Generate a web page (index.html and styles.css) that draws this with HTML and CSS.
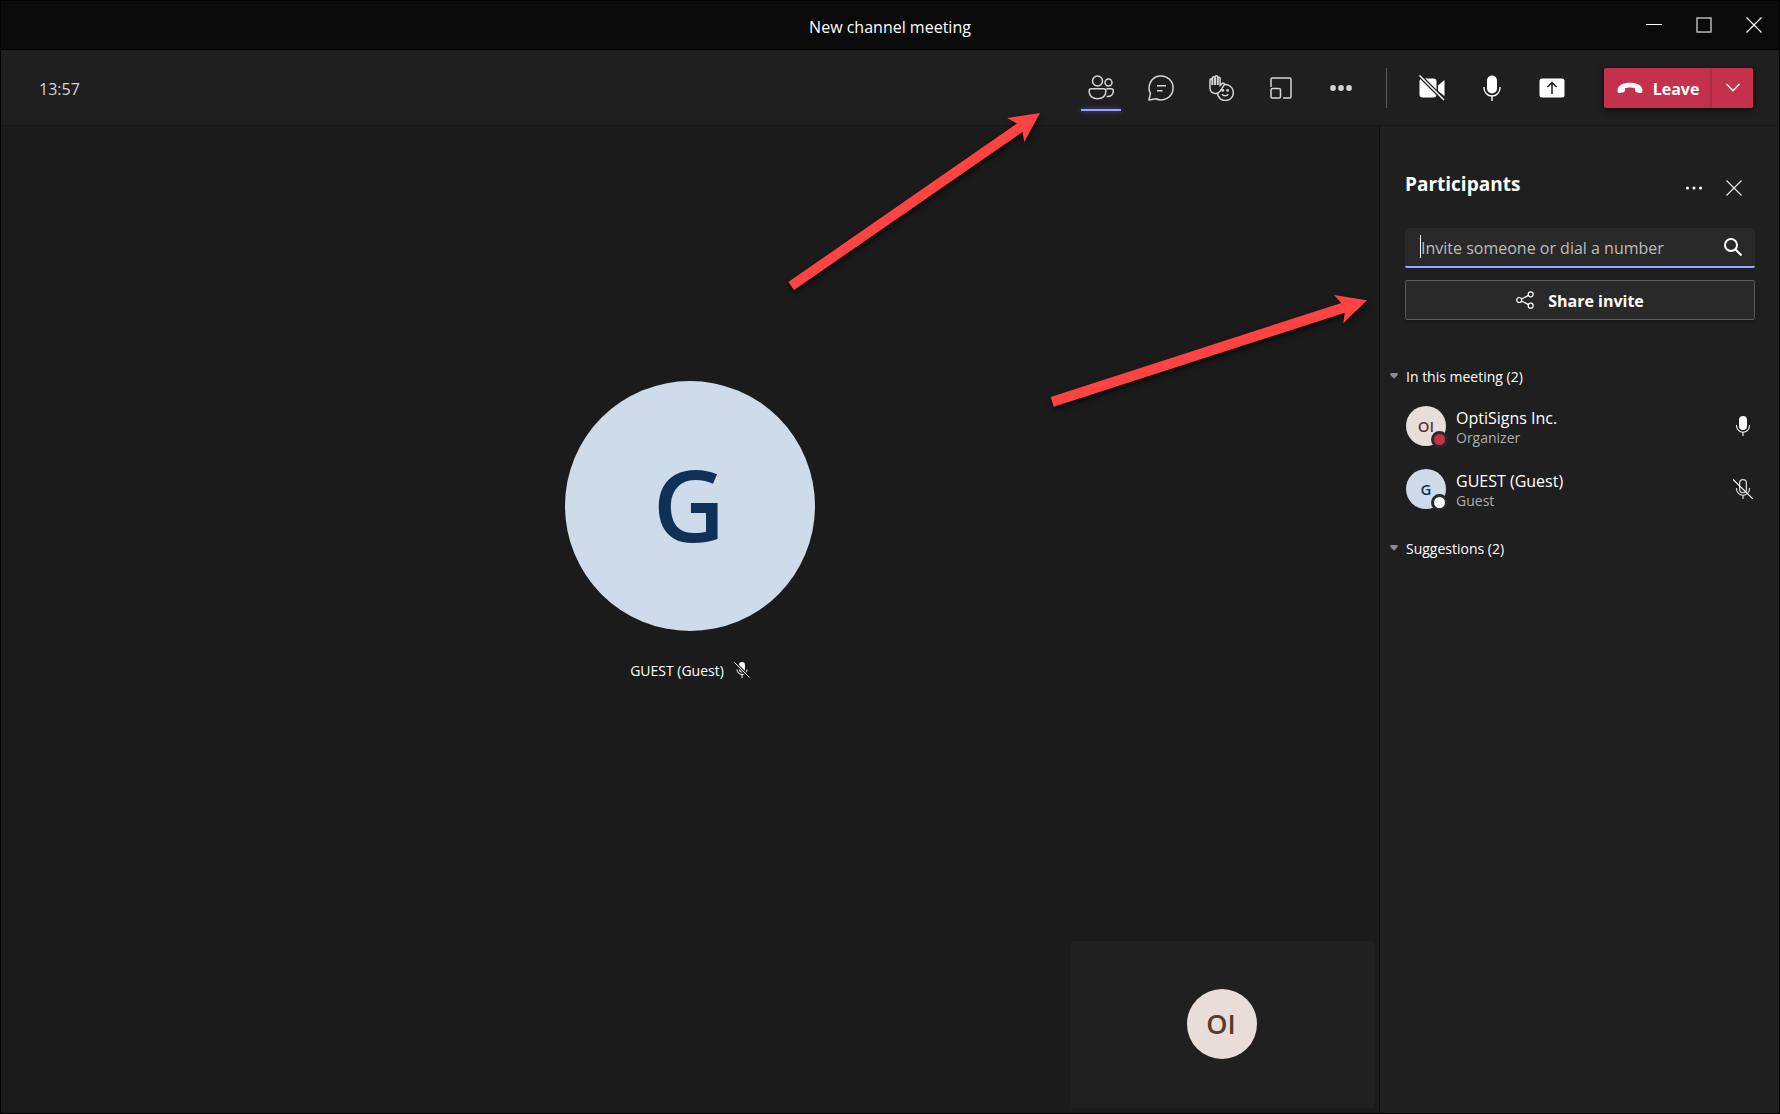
FILE: index.html
```html
<!DOCTYPE html>
<html lang="en">
<head>
<meta charset="utf-8">
<title>New channel meeting</title>
<link rel="stylesheet" href="styles.css">
</head>
<body>
<div class="window">
  <header class="titlebar">
    <h1 class="title">New channel meeting</h1>
    <div class="window-controls">
      <button class="win-btn" aria-label="Minimize"><svg width="16" height="16" viewBox="0 0 16 16"><path d="M0 7.500h16" stroke="#fff"/></svg></button>
      <button class="win-btn" aria-label="Maximize"><svg width="16" height="16" viewBox="0 0 16 16"><rect x="1" y="1" width="14" height="14" fill="none" stroke="#c4c4c4" stroke-width="1.400"/></svg></button>
      <button class="win-btn" aria-label="Close"><svg width="16" height="16" viewBox="0 0 16 16"><path d="M.5 .5l15 15M15.500 .5l-15 15" stroke="#fff" stroke-width="1.200"/></svg></button>
    </div>
  </header>

  <div class="toolbar">
    <time class="timer">13:57</time>
    <div class="tools">
      <button class="tool active" aria-label="Participants"><svg width="26" height="26" viewBox="0 0 26 26" fill="none" stroke="#d6d6d6" stroke-width="1.500"><circle cx="9.500" cy="6" r="5"/><circle cx="20.500" cy="7.500" r="3.500"/><path d="M3.200 13.800h12.600c1.200 0 2 .8 2 2v1.200c0 4-3.500 6.700-8.300 6.700S1.200 21 1.200 17v-1.200c0-1.200.8-2 2-2zM18.500 13.800h4.800c1.100 0 2 .9 2 2v.7c0 3.400-2.600 5.300-6.700 5.100"/></svg></button>
      <button class="tool" aria-label="Chat"><svg width="26" height="26" viewBox="0 0 26 26" fill="none" stroke="#d6d6d6" stroke-width="1.500"><path d="M1 25l1.400-6.600A12 12 0 1 1 8 23.800z" stroke-linejoin="round"/><path d="M9 10.800h9M9 15.800h5.500"/></svg></button>
      <button class="tool" aria-label="Reactions"><svg width="26" height="26" viewBox="0 0 26 26" fill="none" stroke="#d6d6d6" stroke-width="1.500"><path d="M2 13V5c0-1.600 2.400-1.600 2.400 0v5V3c0-1.700 2.700-1.700 2.700 0v6.500V2c0-1.600 2.600-1.600 2.600 0v7.500V3.300c0-1.500 2.400-1.500 2.400 0v7l2-1.700c1.500-1.200 3 .1 2 1.500l-4 6c-1.200 1.800-3.100 2.500-5 2.300C3.500 18 2 16 2 13z"/><path d="M4.400 4v6M7.100 3v7M9.700 3v7" stroke-width="1.800"/><path d="M16.500 9.600a8 8 0 1 1-7 9.400M14 19.200c1.200 2.200 5 2.200 6.200 0"/><circle cx="14.800" cy="15.400" r=".7" fill="#d6d6d6"/><circle cx="19.600" cy="15.400" r=".7" fill="#d6d6d6"/></svg></button>
      <button class="tool" aria-label="Breakout rooms"><svg width="22" height="22" viewBox="0 0 22 22" fill="none" stroke="#d6d6d6" stroke-width="1.500"><path d="M1 10V2.500C1 1.700 1.700 1 2.500 1h17c.8 0 1.500.7 1.500 1.500v17c0 .8-.7 1.500-1.500 1.500H13"/><rect x="1" y="11.500" width="9.500" height="9.500" rx="1.500"/></svg></button>
      <button class="tool" aria-label="More actions"><svg width="24" height="8" viewBox="0 0 24 8" fill="#d6d6d6"><circle cx="4" cy="4" r="2.900"/><circle cx="12" cy="4" r="2.900"/><circle cx="20" cy="4" r="2.900"/></svg></button>
    </div>
    <div class="divider"></div>
    <div class="tools">
      <button class="tool" aria-label="Turn camera on"><svg width="26" height="26" viewBox="0 0 26 26" fill="#fff"><rect x=".5" y="3.500" width="17" height="19" rx="3"/><path d="M19 10.500L25.500 5v16L19 16z"/><path d="M0 0l26 26" stroke="#1f1f1f" stroke-width="4"/><path d="M.5 .5l24.500 24.500" stroke="#fff" stroke-width="1.500"/></svg></button>
      <button class="tool" aria-label="Mute"><svg width="26" height="26" viewBox="0 0 26 26"><rect x="8" y=".5" width="10" height="18" rx="5" fill="#fff"/><path d="M5 12v1a8 8 0 0 0 16 0v-1M13 21v5" fill="none" stroke="#fff" stroke-width="1.400"/></svg></button>
      <button class="tool" aria-label="Share content"><svg width="26" height="26" viewBox="0 0 26 26"><rect x=".5" y="3.500" width="25" height="19" rx="2.500" fill="#fff"/><path d="M13 19V7.500M8.500 12L13 7.500l4.500 4.500" fill="none" stroke="#1f1f1f" stroke-width="1.500"/></svg></button>
    </div>
    <div class="leave-group">
      <button class="leave"><svg width="26" height="12" viewBox="0 0 26 12" fill="#fff"><path d="M13 .7C19.500 .7 25.500 3 25.500 8.500c0 2-.9 2.900-2.500 2.500l-3.300-.8c-1.200-.3-1.700-1-1.700-2.200V6.200C16 5.300 10 5.300 8 6.200V8c0 1.200-.5 1.900-1.700 2.200L3 11C1.400 11.400.5 10.500.5 8.500.5 3 6.500.7 13 .7z"/></svg><span class="btn-text">Leave</span></button>
      <button class="leave-menu" aria-label="Leave options"><svg width="14" height="9" viewBox="0 0 14 9"><path d="M.5 1L7 7.800 13.500 1" fill="none" stroke="#fff" stroke-width="1.300"/></svg></button>
    </div>
  </div>

  <div class="content">
    <main class="stage">
      <section class="speaker">
        <div class="avatar guest avatar-xl">G</div>
        <div class="speaker-name"><span class="btn-text">GUEST (Guest)</span>
          <svg width="16" height="16" viewBox="0 0 16 16"><rect x="5" y="0" width="6" height="10.500" rx="3" fill="#fff"/><path d="M3 7.500a5 5 0 0 0 10 0M8 12.500V16" fill="none" stroke="#fff"/><path d="M0 0l16 16" stroke="#1b1b1b" stroke-width="3"/><path d="M.5 .5l15 15" stroke="#fff"/></svg>
        </div>
      </section>
      <section class="self-view"><div class="avatar organizer avatar-lg">OI</div></section>
    </main>

    <aside class="panel">
      <div class="panel-head">
        <h2 class="panel-title">Participants</h2>
        <button class="panel-btn" aria-label="More options"><svg width="18" height="4" viewBox="0 0 18 4" fill="#fff"><circle cx="2.500" cy="2" r="1.500"/><circle cx="9" cy="2" r="1.500"/><circle cx="15.500" cy="2" r="1.500"/></svg></button>
        <button class="panel-btn" aria-label="Close panel"><svg width="16" height="16" viewBox="0 0 16 16"><path d="M.5 .5l15 15M15.500 .5l-15 15" stroke="#e8e8e8" stroke-width="1.200"/></svg></button>
      </div>
      <div class="search">
        <input class="search-input" type="text" aria-label="Invite someone or dial a number" placeholder="Invite someone or dial a number">
        <span class="caret"></span>
        <svg width="18" height="18" viewBox="0 0 18 18" fill="none" stroke="#fff" stroke-width="2"><circle cx="7" cy="7" r="6"/><path d="M11.300 11.300l6.200 6.200"/></svg>
      </div>
      <button class="share"><svg width="18" height="18" viewBox="0 0 18 18" fill="none" stroke="#fff" stroke-width="1.200"><circle cx="3.200" cy="9" r="2.500"/><circle cx="14.700" cy="3.300" r="2.500"/><circle cx="14.700" cy="14.700" r="2.500"/><path d="M5.500 8l7-3.600M5.500 10l7 3.600"/></svg><span class="btn-text">Share invite</span></button>

      <button class="group-head" aria-expanded="true"><svg width="8" height="6" viewBox="0 0 8 6" fill="#8c8c8c"><path d="M.5 0h7c.5 1.200.2 2-.6 2.800L4 5.700 1.100 2.800C.3 2 0 1.200.5 0z"/></svg>In this meeting (2)</button>
      <ul class="people">
        <li class="person">
          <div class="avatar organizer avatar-sm">OI<span class="presence busy"></span></div>
          <div class="who"><span class="name">OptiSigns Inc.</span><span class="role">Organizer</span></div>
          <svg width="20" height="20" viewBox="0 0 20 20"><rect x="6" y="0" width="8" height="14" rx="4" fill="#fff"/><path d="M3.500 9v.8a6.500 6.500 0 0 0 13 0V9M10 16.500V20" fill="none" stroke="#fff" stroke-width="1.100"/></svg>
        </li>
        <li class="person">
          <div class="avatar guest avatar-sm">G<span class="presence"></span></div>
          <div class="who"><span class="name">GUEST (Guest)</span><span class="role">Guest</span></div>
          <svg width="20" height="20" viewBox="0 0 20 20" fill="none" stroke="#d8d8d8" stroke-width="1.200"><rect x="6.600" y=".6" width="6.800" height="13" rx="3.400"/><path d="M3.500 9v.8a6.500 6.500 0 0 0 13 0V9M10 16.500V20"/><path d="M0 .5l20 19.500" stroke="#fff"/></svg>
        </li>
      </ul>
      <button class="group-head" aria-expanded="true"><svg width="8" height="6" viewBox="0 0 8 6" fill="#8c8c8c"><path d="M.5 0h7c.5 1.200.2 2-.6 2.800L4 5.700 1.100 2.800C.3 2 0 1.200.5 0z"/></svg>Suggestions (2)</button>
    </aside>
  </div>

  <svg class="annotations" width="1400" height="420" viewBox="0 0 1400 420" fill="#ff4343" aria-hidden="true">
    <path d="M1040 113L1007 118 1017 123.500 788.300 282 794 290 1022.500 132 1024.300 142z"/>
    <path d="M1367 300.300L1334 295 1341.300 303 1050.700 397 1053.700 406.700 1344.700 312.700 1343.300 323.300z"/>
  </svg>
</div>
</body>
</html>
```
FILE: styles.css
```css
* {
  box-sizing: border-box;
}

body {
  margin: 0;
  background: #000;
  color: #fff;
  font-family: "Open Sans", "Noto Sans", sans-serif;
  font-size: 16px;
}

button {
  display: flex;
  align-items: center;
  justify-content: center;
  margin: 0;
  padding: 0;
  border: 0;
  background: none;
  color: inherit;
  font: inherit;
}

svg {
  flex: none;
}

.window {
  position: relative;
  display: flex;
  flex-direction: column;
  min-height: 100vh;
  border: 1px solid #000;
  background: #1b1b1b;
}

.titlebar {
  display: grid;
  grid-template-columns: 1fr auto 1fr;
  align-items: center;
  height: 49px;
  border-bottom: 1px solid #000;
  background: #0a0a0a;
}

.title {
  grid-column: 2;
  margin: 0;
  padding-top: 3px;
  font-size: 16px;
  font-weight: 400;
}

.window-controls {
  display: flex;
  justify-content: flex-end;
}

.win-btn {
  width: 50px;
  height: 48px;
}

.toolbar {
  display: flex;
  align-items: center;
  height: 76px;
  padding: 0 26px 0 38px;
  border-bottom: 1px solid #171717;
  background: #1f1f1f;
}

.timer {
  flex: 1;
  padding-top: 2px;
  color: #d6d6d6;
}

.btn-text {
  padding-top: 2px;
}

.tools {
  display: flex;
  gap: 20px;
}

.tool {
  position: relative;
  width: 40px;
  height: 40px;
}

.active::after {
  content: "";
  position: absolute;
  right: 0;
  bottom: -3px;
  left: 0;
  height: 2px;
  background: #9ea2ff;
  box-shadow: 0 0 5px #5b5fc7;
}

.divider {
  width: 1px;
  height: 40px;
  margin: 0 25px;
  background: #5c5c5c;
}

.leave-group {
  display: flex;
  height: 40px;
  margin-left: 32px;
  border-radius: 2px;
  background: #c4314b;
  box-shadow: 0 2px 6px #000000b0;
  overflow: hidden;
}

.leave {
  gap: 10px;
  width: 108px;
  font-weight: 700;
}

.leave-menu {
  width: 41px;
  box-shadow: 0 0 4px #00000060;
}

.content {
  display: flex;
  flex: 1;
}

.stage {
  display: flex;
  flex: 1;
  flex-direction: column;
  gap: 5px;
  padding: 0 5px 5px;
}

.speaker {
  display: flex;
  flex: 1;
  flex-direction: column;
  align-items: center;
  justify-content: center;
  gap: 28px;
}

.avatar {
  position: relative;
  display: flex;
  flex: none;
  align-items: center;
  justify-content: center;
  border-radius: 50%;
  font-weight: 600;
}

.guest {
  background: #cedbea;
  color: #0f3057;
}

.organizer {
  background: #e8ddd9;
  color: #593a2c;
}

.avatar-xl {
  width: 250px;
  height: 250px;
  padding: 0 2px 6px 0;
  font-size: 100px;
}

.avatar-lg {
  width: 70px;
  height: 70px;
  padding-right: 2px;
  font-size: 27px;
}

.avatar-sm {
  width: 40px;
  height: 40px;
  font-size: 15px;
}

.speaker-name {
  display: flex;
  align-items: center;
  gap: 10px;
  font-size: 14px;
  line-height: 20px;
}

.self-view {
  display: flex;
  align-self: flex-end;
  align-items: center;
  justify-content: center;
  width: 303px;
  height: 167px;
  padding: 0 1px 2px 0;
  background: #202020;
}

.panel {
  width: 400px;
  padding: 42px 24px 0 25px;
  border-left: 1px solid #0f0f0f;
  background: #1f1f1f;
}

.panel-head {
  display: flex;
  align-items: center;
  height: 40px;
  padding-right: 1px;
}

.panel-title {
  flex: 1;
  margin: 0;
  padding-bottom: 8px;
  font-size: 19px;
  font-weight: 700;
}

.panel-btn {
  width: 40px;
  height: 40px;
}

.search {
  position: relative;
  display: flex;
  align-items: center;
  height: 40px;
  margin-top: 20px;
  padding-right: 13px;
  border-bottom: 2px solid #9ea2ff;
  border-radius: 4px 4px 2px 2px;
  background: #292929;
}

.search-input {
  flex: 1;
  min-width: 0;
  padding: 2px 0 0 16px;
  border: 0;
  outline: 0;
  background: none;
  color: #fff;
  font: inherit;
}

.search-input::placeholder {
  color: #bdbdbd;
  opacity: 1;
}

.caret {
  position: absolute;
  top: 7px;
  left: 15px;
  width: 1px;
  height: 23px;
  background: #fff;
}

.share {
  gap: 14px;
  width: 100%;
  height: 40px;
  margin-top: 12px;
  border: 1px solid #5c5c5c;
  border-radius: 2px;
  background: #292929;
  font-weight: 700;
  box-shadow: 0 2px 4px #00000040;
}

.group-head {
  gap: 8px;
  height: 20px;
  margin: 46px 0 0 -15px;
  font-size: 14px;
}

.people {
  display: flex;
  flex-direction: column;
  gap: 23px;
  margin: 20px 0 -17px;
  padding: 0 2px 0 1px;
  list-style: none;
}

.person {
  display: flex;
  align-items: center;
  height: 40px;
  gap: 10px;
}

.who {
  display: flex;
  flex: 1;
  flex-direction: column;
  padding-top: 2px;
}

.name {
  line-height: 22px;
}

.role {
  color: #adadad;
  font-size: 14px;
  line-height: 18px;
}

.presence {
  position: absolute;
  right: -2px;
  bottom: -2px;
  width: 17px;
  height: 17px;
  border: 3px solid #292929;
  border-radius: 50%;
  background: #fff;
}

.busy {
  background: #c4314b;
}

.annotations {
  position: absolute;
  top: -1px;
  left: -1px;
  filter: drop-shadow(1px 3px 3px #00000099);
  pointer-events: none;
}
```
